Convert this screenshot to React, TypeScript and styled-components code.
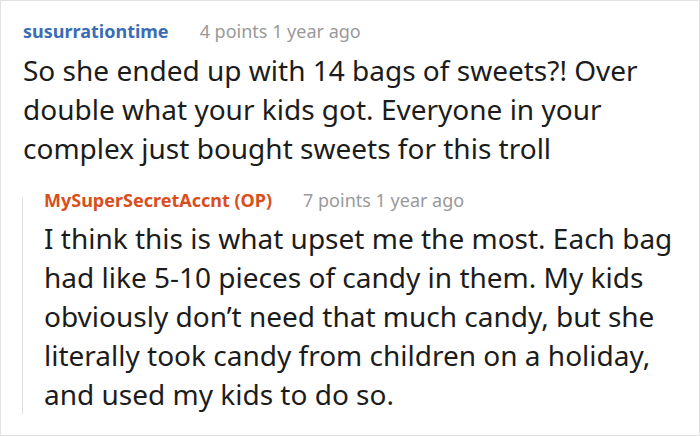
import styled, { createGlobalStyle } from "styled-components";

const GlobalStyle = createGlobalStyle`
  html, body {
    margin: 0;
    padding: 0;
    background: #ffffff;
  }
`;

const Frame = styled.div`
  box-sizing: border-box;
  width: 700px;
  height: 436px;
  border: 1px solid #e2e2e2;
  padding: 18px 4px 0 22px;
  font-family: "Noto Sans", "Open Sans", sans-serif;
  background: #ffffff;
  overflow: hidden;
`;

const Comment = styled.div`
  display: flex;
  flex-direction: column;
  gap: 8px;
`;

// reply thread: the grey guide line starts level with the author line
const Reply = styled.div`
  position: relative;
  display: flex;
  flex-direction: column;
  gap: 7px;
  margin-top: 20px;
  margin-left: -1px;
  padding-left: 22px;

  &::before {
    content: "";
    position: absolute;
    left: 0;
    top: 10px;
    bottom: 0;
    width: 1px;
    background: #e0e0e0;
  }
`;

const Header = styled.div`
  display: flex;
  align-items: baseline;
  gap: 31px;
  font-size: 18px;
  line-height: 24px;
`;

const Author = styled.span<{ $op?: boolean }>`
  font-weight: 700;
  color: ${(p) => (p.$op ? "#d84f1c" : "#3b6cb4")};
`;

const Meta = styled.span`
  color: #999999;
`;

const Body = styled.p<{ $width: number }>`
  margin: 0;
  width: ${(p) => p.$width}px;
  font-size: 28px;
  line-height: 39px;
  color: #1c1c1c;
`;

export default function App() {
  return (
    <>
      <GlobalStyle />
      <Frame>
        <Comment>
          <Header>
            <Author>susurrationtime</Author>
            <Meta>4 points 1 year ago</Meta>
          </Header>
          <Body $width={660}>
            So she ended up with 14 bags of sweets?! Over double what your kids
            got. Everyone in your complex just bought sweets for this troll
          </Body>
        </Comment>
        <Reply>
          <Header>
            <Author $op>MySuperSecretAccnt (OP)</Author>
            <Meta>7 points 1 year ago</Meta>
          </Header>
          <Body $width={650}>
            I think this is what upset me the most. Each bag had like 5-10
            pieces of candy in them. My kids obviously don’t need that much
            candy, but she literally took candy from children on a holiday, and
            used my kids to do so.
          </Body>
        </Reply>
      </Frame>
    </>
  );
}
